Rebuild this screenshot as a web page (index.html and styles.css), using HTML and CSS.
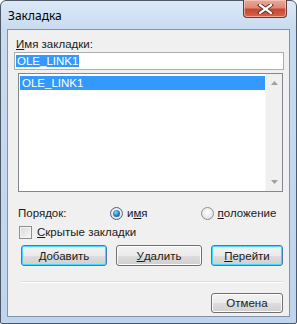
FILE: index.html
```html
<!DOCTYPE html>
<html lang="ru">
<head>
<meta charset="utf-8">
<title>Закладка</title>
<link rel="stylesheet" href="styles.css">
</head>
<body>
<div class="window">
  <div class="titlebar">
    <span class="title">Закладка</span>
    <div class="close">
      <svg width="17" height="10" viewBox="0 0 17 10">
        <path d="M3 1 L14 9 M14 1 L3 9" stroke="#5a2a22" stroke-width="4" stroke-linecap="square"/>
        <path d="M3 1 L14 9 M14 1 L3 9" stroke="#ffffff" stroke-width="2.2" stroke-linecap="square"/>
      </svg>
    </div>
  </div>
  <div class="client">
    <div class="lbl"><u>И</u>мя закладки:</div>
    <div class="input"><span class="sel">OLE_LINK1</span></div>
    <div class="listbox">
      <div class="items">
        <div class="item selected">OLE_LINK1</div>
      </div>
      <div class="scrollbar">
        <svg width="7" height="4" viewBox="0 0 7 4"><path d="M0 4 L3.5 0 L7 4 Z" fill="#a0a0a0"/></svg>
        <svg width="7" height="4" viewBox="0 0 7 4"><path d="M0 0 L3.5 4 L7 0 Z" fill="#a0a0a0"/></svg>
      </div>
    </div>
    <div class="order-row">
      <span class="order-label">Порядок:</span>
      <span class="radio-item first"><span class="radio checked"><span class="dot"></span></span>и<u>м</u>я</span>
      <span class="radio-item second"><span class="radio"></span><u>п</u>оложение</span>
    </div>
    <div class="check-row"><span class="checkbox"></span><u>С</u>крытые закладки</div>
    <div class="btn-row">
      <div class="btn default"><u>Д</u>обавить</div>
      <div class="btn"><u>У</u>далить</div>
      <div class="btn default small"><u>П</u>ерейти</div>
    </div>
    <div class="sep"></div>
    <div class="btn-row end">
      <div class="btn small">Отмена</div>
    </div>
  </div>
</div>
</body>
</html>
```

FILE: styles.css
```css
* { box-sizing: border-box; }
html, body { margin: 0; padding: 0; background: #ffffff; }
body { font-family: "Liberation Sans", Arial, sans-serif; font-size: 11.5px; color: #1a1a1a; }
u { text-decoration: underline; text-underline-offset: 1px; }

.window {
  width: 297px;
  height: 324px;
  border: 1px solid #4e5968;
  border-radius: 6px 6px 2px 2px;
  background: linear-gradient(to bottom, #dce9f7 0px, #c9dbf0 28px, #bfd4ee 100%);
  padding: 0 6px 6px 6px;
  display: flex;
  flex-direction: column;
}

.titlebar {
  height: 28px;
  display: flex;
  align-items: flex-start;
  justify-content: space-between;
}
.title {
  font-family: "Noto Sans", "Liberation Sans", sans-serif;
  font-size: 12px;
  margin-top: 6px;
  margin-left: 1px;
  color: #000;
}
.close {
  width: 44px;
  height: 18px;
  margin-top: -1px;
  margin-right: 3px;
  border: 1px solid #6a3b35;
  border-top: none;
  border-radius: 0 0 4px 4px;
  background: linear-gradient(to bottom, #e9a99b 0%, #dc8a78 45%, #c8472f 55%, #d7654c 100%);
  box-shadow: inset 0 0 0 1px rgba(255,210,200,0.6);
  display: flex;
  align-items: center;
  justify-content: center;
}

.client {
  flex: 1;
  border: 1px solid #8193a8;
  background: #f0f0f0;
  padding: 7px 6px 0 6px;
  display: flex;
  flex-direction: column;
}

.lbl {
  margin-left: 2px;
  line-height: 14px;
  height: 14px;
}

.input {
  margin-top: 1px;
  width: 270px;
  height: 18px;
  border: 1px solid #abadb3;
  background: #ffffff;
  padding: 1px 1px;
  line-height: 14px;
}
.sel {
  background: #3399ff;
  color: #ffffff;
  padding: 0 1px;
}

.listbox {
  margin-top: 3px;
  margin-left: 4px;
  width: 265px;
  height: 119px;
  border: 1px solid #828790;
  background: #ffffff;
  display: flex;
}
.items {
  flex: 1;
  padding: 2px 0 0 1px;
}
.item {
  height: 14px;
  line-height: 14px;
  padding-left: 2px;
}
.item.selected {
  background: #3399ff;
  color: #ffffff;
}
.scrollbar {
  width: 17px;
  background: #f0f0f0;
  border-left: 1px solid #f7f7f7;
  display: flex;
  flex-direction: column;
  align-items: center;
  justify-content: space-between;
  padding: 7px 0 7px 0;
}

.order-row {
  margin-top: 14px;
  height: 14px;
  line-height: 14px;
  display: flex;
  align-items: center;
  padding-left: 4px;
}
.order-label { width: 92px; }
.radio-item { display: flex; align-items: center; }
.radio-item.second { margin-left: 53px; }
.radio {
  width: 13px;
  height: 13px;
  border-radius: 50%;
  border: 1px solid #8f8f8f;
  background: radial-gradient(circle at 50% 40%, #ffffff 0%, #e8e8e8 60%, #d6d6d6 100%);
  margin-right: 4px;
  display: flex;
  align-items: center;
  justify-content: center;
}
.radio.checked { border-color: #4d6185; }
.dot {
  width: 7px;
  height: 7px;
  border-radius: 50%;
  background: radial-gradient(circle at 40% 35%, #8fd3f5 0%, #2a8ad4 45%, #0d3e6e 100%);
}

.check-row {
  margin-top: 5px;
  height: 14px;
  line-height: 14px;
  display: flex;
  align-items: center;
  padding-left: 5px;
}
.checkbox {
  width: 13px;
  height: 13px;
  border: 1px solid #8e8f8f;
  background: linear-gradient(135deg, #d9d9d9 0%, #f6f6f6 100%);
  box-shadow: inset 0 0 0 1px #f4f4f4;
  margin-right: 5px;
}

.btn-row {
  margin-top: 6px;
  display: flex;
  padding-left: 7px;
  gap: 9px;
}
.btn-row.end { justify-content: flex-end; margin-top: 10px; padding-right: 0; }
.btn {
  width: 86px;
  height: 21px;
  border: 1px solid #707070;
  border-radius: 3px;
  background: linear-gradient(to bottom, #f2f2f2 0%, #ebebeb 50%, #dddddd 51%, #cfcfcf 100%);
  box-shadow: inset 0 0 0 1px #fcfcfc;
  display: flex;
  align-items: center;
  justify-content: center;
  line-height: 14px;
}
.btn.small { width: 72px; }
.btn-row.end .btn { height: 20px; }
.btn.default {
  border-color: #3c7fb1;
  box-shadow: inset 0 0 0 1px #48d8fb;
}

.sep {
  margin-top: 15px;
  margin-left: 7px;
  width: 262px;
  height: 2px;
  border-top: 1px solid #d5dfe5;
  border-bottom: 1px solid #ffffff;
}
```
